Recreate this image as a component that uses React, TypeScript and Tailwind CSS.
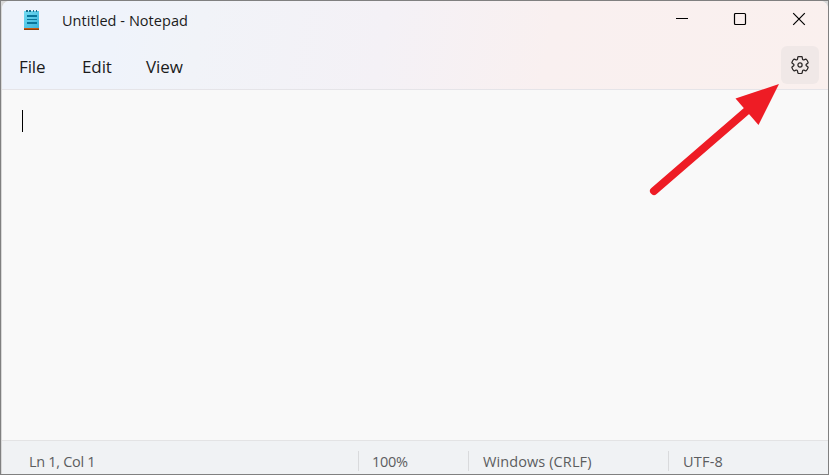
import { useState } from "react";

const menus = [
  { label: "File", className: "w-[63px]" },
  { label: "Edit", className: "w-16" },
  { label: "View", className: "w-16" },
];

function NotepadIcon() {
  return (
    <svg width="16" height="21" viewBox="0 0 16 21" shapeRendering="crispEdges">
      <defs>
        <linearGradient id="page" x1="0" y1="0" x2="1" y2="1">
          <stop offset="0" stopColor="#72dcf2" />
          <stop offset="1" stopColor="#3bb4dc" />
        </linearGradient>
      </defs>
      <rect x="0" y="1" width="15" height="17" fill="url(#page)" />
      <path d="M2 0h2v2H2zM5 0h2v2H5zM9 0h1v2H9zM12 0h1v2h-1z" fill="#1b6f8b" />
      <path d="M3 5h10v2H3zM3 9h10v1H3zM3 12h10v2H3z" fill="#08769b" />
      <rect x="0" y="18" width="15" height="1" fill="#c9590f" />
      <rect x="0" y="19" width="15" height="1" fill="#8f3f08" />
    </svg>
  );
}

function GearIcon() {
  return (
    <svg width="20" height="20" viewBox="0 0 20 20" fill="none" stroke="#2b2727" strokeWidth="1.25">
      <path d="M1.91 7.38A8.5 8.5 0 0 1 3.7 4.3a.5.5 0 0 1 .54-.13l1.92.68a1 1 0 0 0 1.32-.76l.36-2a.5.5 0 0 1 .4-.4 8.53 8.53 0 0 1 3.55 0c.2.04.35.2.38.4l.37 2a1 1 0 0 0 1.32.76l1.92-.68a.5.5 0 0 1 .54.13 8.5 8.5 0 0 1 1.78 3.08c.06.2 0 .4-.15.54l-1.56 1.32a1 1 0 0 0 0 1.52l1.56 1.32a.5.5 0 0 1 .15.54 8.5 8.5 0 0 1-1.78 3.08.5.5 0 0 1-.54.13l-1.92-.68a1 1 0 0 0-1.32.76l-.37 2a.5.5 0 0 1-.38.4 8.53 8.53 0 0 1-3.56 0 .5.5 0 0 1-.39-.4l-.36-2a1 1 0 0 0-1.32-.76l-1.92.68a.5.5 0 0 1-.54-.13 8.5 8.5 0 0 1-1.78-3.08.5.5 0 0 1 .15-.54l1.56-1.32a1 1 0 0 0 0-1.52L2.06 7.92a.5.5 0 0 1-.15-.54Z" />
      <circle cx="10" cy="10" r="2.1" />
    </svg>
  );
}

function WindowControls() {
  return (
    <div className="flex h-9 text-black">
      <button className="flex w-[59px] items-center justify-center" aria-label="Minimize">
        <svg width="14" height="14" viewBox="0 0 14 14" stroke="currentColor" strokeWidth="1">
          <path d="M1 6.5h12" />
        </svg>
      </button>
      <button className="flex w-[58px] items-center justify-center" aria-label="Maximize">
        <svg width="14" height="14" viewBox="0 0 14 14" fill="none" stroke="currentColor" strokeWidth="1.2">
          <rect x="1.5" y="1.5" width="11" height="11" rx="1" />
        </svg>
      </button>
      <button className="flex w-[59px] items-center justify-center" aria-label="Close">
        <svg width="14" height="14" viewBox="0 0 14 14" stroke="currentColor" strokeWidth="1.2">
          <path d="M1.2 1.2l11.6 11.6M12.8 1.2L1.2 12.8" />
        </svg>
      </button>
    </div>
  );
}

export default function App() {
  const [text, setText] = useState("");

  return (
    <div className="relative h-[475px] w-[829px] border border-[#808080] bg-[#d8d8d8] pl-px font-['Open_Sans',sans-serif]">
      <div className="flex h-full flex-col overflow-hidden rounded-t-lg bg-[#f9f9f9]">
        <header className="h-[89px] shrink-0 border-b border-[#e5e4e8] bg-[linear-gradient(100deg,#eff3fb_0%,#eff3fb_14%,#f1f3f8_24%,#f4f1f6_46%,#f9f0f0_66%,#faf0ee_100%)]">
          <div className="flex h-[37px] justify-between">
            <div className="flex">
              <div className="ml-[22px] mt-[9px] w-[38px]">
                <NotepadIcon />
              </div>
              <span className="mt-2.5 whitespace-nowrap text-[14.5px] leading-5 tracking-[0.05px] text-[#1b1b1b]">Untitled - Notepad</span>
            </div>
            <WindowControls />
          </div>
          <div className="flex justify-between pl-[17px] pr-[9px]">
            <nav className="flex pt-[17px] text-[17px] leading-6 tracking-[-0.1px] text-[#1b1b1b]">
              {menus.map((m) => (
                <button key={m.label} className={`h-6 text-left ${m.className}`}>{m.label}</button>
              ))}
            </nav>
            <button className="mt-2 flex size-[38px] items-center justify-center rounded-md bg-[#f0e8e7]" aria-label="Settings">
              <GearIcon />
            </button>
          </div>
        </header>

        <main className="relative flex-1">
          <textarea
            value={text}
            onChange={(e) => setText(e.target.value)}
            className="size-full resize-none bg-transparent px-5 py-4 text-lg outline-none"
            spellCheck={false}
          />
          {text === "" && <span className="absolute left-5 top-5 h-[22px] w-px bg-black" />}
        </main>

        <footer className="flex h-[34px] shrink-0 border-t border-[#e3e3e4] bg-[#f0f2f4] pt-2.5 text-[14.5px] leading-[21px] tracking-[-0.3px] text-[#5c5d5f]">
          <span className="w-[356px] pl-[27px]">Ln 1, Col 1</span>
          <span className="h-5 w-[110px] border-l border-[#d9dadc] pl-[13px]">100%</span>
          <span className="h-5 w-[200px] border-l border-[#d9dadc] pl-3.5 tracking-[0.1px]">Windows (CRLF)</span>
          <span className="h-5 border-l border-[#d9dadc] pl-3.5 tracking-[0.2px]">UTF-8</span>
        </footer>
      </div>

      {/* arrow pointing at the settings button */}
      <svg className="pointer-events-none absolute left-[644px] top-[79px]" width="140" height="120" viewBox="645 80 140 120">
        <path d="M654 191L750 108" stroke="#ee1c25" strokeWidth="8" strokeLinecap="round" />
        <path d="M779 84L735.5 98.5L758.5 125Z" fill="#ee1c25" />
      </svg>
    </div>
  );
}
